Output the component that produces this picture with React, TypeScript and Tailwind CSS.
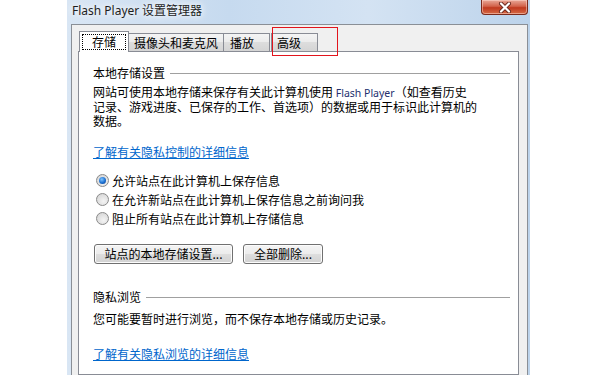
import React from 'react'

const cjk = { fontFamily: '"Noto Sans CJK SC", "Noto Sans", sans-serif' }

function Radio({ checked, label }: { checked?: boolean; label: string }) {
  return (
    <div className="flex h-[19px] items-center">
      <span className="ml-[3px] flex h-[13px] w-[13px] items-center justify-center rounded-full border border-[#8a8a8a] bg-[radial-gradient(circle_at_60%_65%,#f4f4f4,#d0d0d0)]">
        {checked && (
          <span className="h-[7px] w-[7px] rounded-full bg-[radial-gradient(circle_at_40%_35%,#7fc4ff,#1b6fd0_55%,#0b3a86)]" />
        )}
      </span>
      <span className="ml-[3px] text-[12px] leading-[16px] text-black">{label}</span>
    </div>
  )
}

function WinButton({ label, width }: { label: string; width: string }) {
  return (
    <button
      type="button"
      className={`${width} flex h-[20px] items-center justify-center rounded-[3px] border border-[#707070] bg-[linear-gradient(#f4f4f4,#ececec_50%,#dedede_50%,#d2d2d2)] text-[12px] leading-[16px] text-black shadow-[inset_0_0_0_1px_#fcfcfc]`}
    >
      {label}
    </button>
  )
}

function SectionHeading({ title }: { title: string }) {
  return (
    <div className="flex h-[16px] items-center">
      <span className="text-[12px] leading-[16px] text-black">{title}</span>
      <div className="ml-[5px] h-px flex-1 bg-[#a0a0a0]" />
    </div>
  )
}

export default function App() {
  return (
    <div className="relative flex h-[375px] w-[600px] overflow-hidden bg-white" style={cjk}>
      <div className="w-[67px] shrink-0" />

      {/* window frame */}
      <div className="flex w-[463px] shrink-0 flex-col bg-[linear-gradient(90deg,#d9e6f4,#c6daef_35%,#d4e3f3_65%,#bcd3eb)]">
        {/* title bar */}
        <div className="flex h-[24px] items-start justify-between">
          <span
            className="ml-[5px] mt-[2px] text-[12px] leading-[16px] text-[#1e1e1e] [text-shadow:0_0_6px_#ffffff,0_0_10px_#ffffff]"
          >
            <span style={{ fontFamily: '"Noto Sans", sans-serif' }}>Flash Player</span> 设置管理器
          </span>
          <div className="mr-[2px] flex h-[15px] w-[47px] items-center justify-center rounded-b-[4px] border border-t-0 border-[#7a2a1c] bg-[linear-gradient(#e9a898,#d2624a_45%,#c0391f_55%,#d66a45)] shadow-[inset_0_0_0_1px_rgba(255,220,210,0.5)]">
            <svg width="14" height="11" viewBox="0 0 14 11">
              <path d="M3 1.5 L11 9.5 M11 1.5 L3 9.5" stroke="#6b2a20" strokeWidth="4" strokeLinecap="round" />
              <path d="M3 1.5 L11 9.5 M11 1.5 L3 9.5" stroke="#ffffff" strokeWidth="2.2" strokeLinecap="round" />
            </svg>
          </div>
        </div>

        {/* content area */}
        <div className="ml-[4px] flex w-[457px] flex-1 flex-col border-l border-r border-t border-[#8a8f96] bg-[#f0f0f0] pl-[6px] pr-[8px] pt-[6px]">
          {/* tabs */}
          <div className="ml-[1px] flex h-[20px] items-end">
            <div className="relative z-10 -mb-px flex h-[21px] w-[50px] items-center justify-center border-l border-r border-t border-[#898c95] bg-white">
              <div className="absolute inset-x-[2px] bottom-[2px] top-[2px] border border-dotted border-black" />
              <span className="text-[12px] leading-[16px] text-black">存储</span>
            </div>
            <div className="flex h-[18px] w-[95px] items-center border-r border-t border-[#898c95] bg-[linear-gradient(#f4f4f4,#ebebeb_50%,#dddddd_50%,#d4d4d4)] pl-[5px]">
              <span className="text-[12px] leading-[16px] text-black">摄像头和麦克风</span>
            </div>
            <div className="flex h-[18px] w-[46px] items-center border-r border-t border-[#898c95] bg-[linear-gradient(#f4f4f4,#ebebeb_50%,#dddddd_50%,#d4d4d4)] pl-[6px]">
              <span className="text-[12px] leading-[16px] text-black">播放</span>
            </div>
            <div className="ml-[1px] flex h-[18px] w-[47px] items-center border-l border-r border-t border-[#898c95] bg-[linear-gradient(#f4f4f4,#ebebeb_50%,#dddddd_50%,#d4d4d4)] pl-[5px]">
              <span className="text-[12px] leading-[16px] text-black">高级</span>
            </div>
          </div>

          {/* tab panel */}
          <div className="flex flex-1 flex-col border border-[#898c95] bg-white pl-[14px] pr-[8px]">
            <div className="mt-[13px]">
              <SectionHeading title="本地存储设置" />
            </div>
            <p className="mt-[4px] text-[12px] leading-[14px] text-black">
              网站可使用本地存储来保存有关此计算机使用
              <span className="text-[10.5px] text-[#23306e]" style={{ fontFamily: '"Noto Sans", sans-serif' }}>
                {' '}Flash Player
              </span>
              （如查看历史
              <br />
              记录、游戏进度、已保存的工作、首选项）的数据或用于标识此计算机的
              <br />
              数据。
            </p>
            <a href="#" className="mt-[16px] self-start text-[12px] leading-[16px] text-[#0066cc] underline">
              了解有关隐私控制的详细信息
            </a>

            <div className="mt-[11px] flex flex-col">
              <Radio checked label="允许站点在此计算机上保存信息" />
              <Radio label="在允许新站点在此计算机上保存信息之前询问我" />
              <Radio label="阻止所有站点在此计算机上存储信息" />
            </div>

            <div className="ml-px mt-[16px] flex gap-[10px]">
              <WinButton label="站点的本地存储设置..." width="w-[139px]" />
              <WinButton label="全部删除..." width="w-[80px]" />
            </div>

            <div className="mt-[25px]">
              <SectionHeading title="隐私浏览" />
            </div>
            <p className="mt-[7px] text-[12px] leading-[14px] text-black">
              您可能要暂时进行浏览，而不保存本地存储或历史记录。
            </p>
            <a href="#" className="mt-[20px] self-start text-[12px] leading-[16px] text-[#0066cc] underline">
              了解有关隐私浏览的详细信息
            </a>
          </div>
        </div>
      </div>

      {/* red annotation box */}
      <div className="absolute left-[272px] top-[27px] h-[29px] w-[66px] border-[1.5px] border-[#e2141c]" />
    </div>
  )
}
